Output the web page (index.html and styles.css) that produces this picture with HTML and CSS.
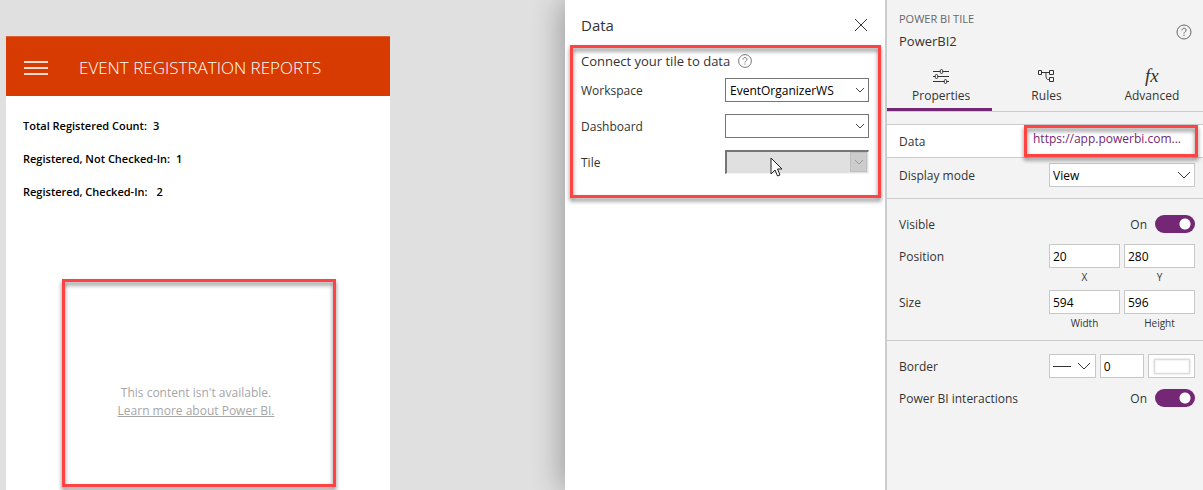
FILE: index.html
```html
<!DOCTYPE html>
<html lang="en">
<head>
<meta charset="utf-8">
<title>Event Registration Reports</title>
<link rel="stylesheet" href="styles.css">
</head>
<body>
<div class="studio">
  <main class="canvas">
    <div class="phone">
      <header class="app-bar">
        <button class="menu" aria-label="Menu">
          <svg width="24" height="15" viewBox="0 0 24 15" aria-hidden="true"><path d="M0 1h24M0 7h24M0 13h24" stroke="#fbd9cc" stroke-width="2"/></svg>
        </button>
        <h1 class="app-title">EVENT REGISTRATION REPORTS</h1>
      </header>
      <dl class="counts">
        <div class="count"><dt>Total Registered Count:</dt><dd>3</dd></div>
        <div class="count"><dt>Registered, Not Checked-In:</dt><dd>1</dd></div>
        <div class="count wide"><dt>Registered, Checked-In:</dt><dd>2</dd></div>
      </dl>
      <section class="tile highlight">
        <p class="tile-text">This content isn't available.</p>
        <a class="tile-text" href="#">Learn more about Power BI.</a>
      </section>
    </div>
  </main>

  <aside class="data-panel">
    <header class="data-head">
      <h2 class="data-title">Data</h2>
      <button class="close" aria-label="Close">
        <svg width="14" height="14" viewBox="0 0 14 14" aria-hidden="true"><path d="M1 1l12 12M13 1L1 13" stroke="#333" fill="none"/></svg>
      </button>
    </header>
    <section class="connect highlight">
      <div class="connect-head">
        <h3 class="connect-title">Connect your tile to data</h3>
        <svg width="14" height="14" viewBox="0 0 16 16" fill="none" stroke="#666" aria-hidden="true"><circle cx="8" cy="8" r="7.3"/><path d="M5.7 6.3c0-3 4.6-2.9 4.6-.2 0 1.700-2.300 1.700-2.300 3.600M8 10.900v1.300"/></svg>
      </div>
      <div class="field">
        <label for="workspace">Workspace</label>
        <span class="pick dark"><select id="workspace"><option>EventOrganizerWS</option></select><svg width="10" height="6" viewBox="0 0 10 6" aria-hidden="true"><path d="M1 1l4 4 4-4" stroke="#444" fill="none"/></svg></span>
      </div>
      <div class="field">
        <label for="dashboard">Dashboard</label>
        <span class="pick dark"><select id="dashboard"><option></option></select><svg width="10" height="6" viewBox="0 0 10 6" aria-hidden="true"><path d="M1 1l4 4 4-4" stroke="#444" fill="none"/></svg></span>
      </div>
      <div class="field">
        <label for="tile">Tile</label>
        <span class="pick off"><select id="tile" disabled><option></option></select><span class="off-arrow"><svg width="10" height="6" viewBox="0 0 10 6" aria-hidden="true"><path d="M1 1l4 4 4-4" stroke="#999" fill="none"/></svg></span>
          <svg class="pointer" width="13" height="20" viewBox="0 0 13 20" aria-hidden="true"><path d="M1 1v16l4-4 2.500 6 2.500-1-2.500-6H12z" fill="#fff" stroke="#222"/></svg>
        </span>
      </div>
    </section>
  </aside>

  <aside class="props">
    <header class="props-head">
      <div>
        <p class="kind">POWER BI TILE</p>
        <h2 class="name">PowerBI2</h2>
      </div>
      <button class="help" aria-label="Help">
        <svg width="16" height="16" viewBox="0 0 16 16" fill="none" stroke="#666" aria-hidden="true"><circle cx="8" cy="8" r="7"/><path d="M6 6.300c0-2.700 4.100-2.700 4.100-.2 0 1.700-2.100 1.600-2.100 3.500M8 10.700v1.300"/></svg>
      </button>
    </header>
    <nav class="tabs">
      <button class="tab active">
        <svg width="16" height="16" viewBox="0 0 16 16" fill="none" stroke="#333" aria-hidden="true"><path d="M0 3.500h7M10 3.500h6M0 8.500h2M5 8.500h11M0 13.500h11M14 13.500h2"/><rect x="7.300" y="1.500" width="2.400" height="4" rx="1.200"/><rect x="2.300" y="6.500" width="2.400" height="4" rx="1.200"/><rect x="11.300" y="11.500" width="2.400" height="4" rx="1.200"/></svg>
        Properties
      </button>
      <button class="tab">
        <svg width="16" height="16" viewBox="0 0 16 16" fill="none" stroke="#333" aria-hidden="true"><path d="M.5 2.500h3v4h-3zM11.500 2.500h4v4h-4zM11.500 9.500h4v4h-4zM3.500 4.500h8M7.500 4.500c1 1 0 4 1 6 .5 1 1 1 3 1"/></svg>
        Rules
      </button>
      <button class="tab">
        <span class="fx" aria-hidden="true">fx</span>
        Advanced
      </button>
    </nav>
    <div class="row data-row">
      <span class="row-label">Data</span>
      <a class="url highlight" href="#">https://app.powerbi.com...</a>
    </div>
    <div class="group mode">
      <div class="row">
        <label class="row-label" for="mode">Display mode</label>
        <span class="controls"><span class="pick large"><select id="mode"><option>View</option></select><svg width="14" height="8" viewBox="0 0 14 8" aria-hidden="true"><path d="M1 1l6 6 6-6" stroke="#333" fill="none"/></svg></span></span>
      </div>
    </div>
    <div class="group layout">
      <div class="row switch-row">
        <label class="row-label" for="visible">Visible</label>
        <span>On</span><input class="toggle" id="visible" type="checkbox" role="switch" checked>
      </div>
      <div class="row">
        <span class="row-label">Position</span>
        <div class="controls">
          <div class="num"><input id="x" value="20"><label for="x">X</label></div>
          <div class="num"><input id="y" value="280"><label for="y">Y</label></div>
        </div>
      </div>
      <div class="row">
        <span class="row-label">Size</span>
        <div class="controls">
          <div class="num"><input id="w" value="594"><label for="w">Width</label></div>
          <div class="num"><input id="h" value="596"><label for="h">Height</label></div>
        </div>
      </div>
    </div>
    <div class="group border">
      <div class="row">
        <label class="row-label" for="bw">Border</label>
        <div class="controls">
          <button class="line-style" aria-label="Border style"><svg width="38" height="8" viewBox="0 0 38 8" fill="none" stroke="#333" aria-hidden="true"><path d="M0 4.500h18M25 1l6 6 6-6"/></svg></button>
          <div class="num"><input id="bw" value="0"></div>
          <button class="swatch" aria-label="Border color"><span></span></button>
        </div>
      </div>
      <div class="row switch-row">
        <label class="row-label" for="inter">Power BI interactions</label>
        <span>On</span><input class="toggle" id="inter" type="checkbox" role="switch" checked>
      </div>
    </div>
  </aside>
</div>
</body>
</html>
```
FILE: styles.css
```css
* { box-sizing: border-box; }

body {
  margin: 0;
  font: 12px/16px "Open Sans", "Noto Sans", sans-serif;
  color: #333;
}

h1, h2, h3, p, dl, dd { margin: 0; font-weight: 400; }

button {
  display: flex;
  padding: 0;
  border: 0;
  background: none;
  font: inherit;
  color: inherit;
}

input, select { font: inherit; color: #000; }

.studio {
  display: grid;
  grid-template-columns: 1fr 320px 318px;
  min-height: 100vh;
  background: #e0e0e0;
}

/* Red callout frame laid over the content it marks */
.highlight { position: relative; }
.highlight::after {
  content: "";
  position: absolute;
  inset: 0;
  border: 3px solid #ff4343;
  filter: drop-shadow(0 3px 2px rgba(0, 0, 0, .5));
  pointer-events: none;
}

/* App canvas */
.canvas {
  display: flex;
  padding: 36px 6px 0;
}
.phone {
  flex: 0 1 384px;
  display: flex;
  flex-direction: column;
  background: #fff;
}
.app-bar {
  display: flex;
  align-items: center;
  gap: 31px;
  height: 60px;
  padding: 3px 18px 0;
  border-top: 1px solid #df6237;
  background: #d83b01;
}
.app-title {
  font-size: 17px;
  font-weight: 300;
  line-height: 24px;
  color: #fff;
  white-space: nowrap;
}
.counts {
  padding: 13px 17px 12px;
  font-size: 11px;
  line-height: 33px;
  color: #000;
}
.count { display: flex; gap: 6px; }
.count dt, .count dd { font-weight: 600; }
.count.wide { gap: 9px; }
.tile {
  width: 274px;
  height: 208px;
  margin: 59px 54px 3px 56px;
  display: flex;
  flex-direction: column;
  align-items: center;
  padding: 105px 6px 0 0;
}
.tile-text {
  font-size: 12px;
  line-height: 18px;
  color: #a6a6a6;
}

/* Data panel */
.data-panel {
  background: #fff;
  box-shadow: -4px 0 28px rgba(0, 0, 0, .3);
}
.data-head {
  display: flex;
  justify-content: space-between;
  align-items: center;
  height: 45px;
  padding: 4px 17px 0 16px;
}
.data-title { font-size: 15px; line-height: 20px; }
.connect {
  display: flex;
  flex-direction: column;
  gap: 12px;
  margin: 0 4px 0 5px;
  padding: 6px 12px 24px 11px;
}
.connect-head {
  display: flex;
  align-items: center;
  gap: 8px;
  height: 20px;
  margin-bottom: -5px;
}
.connect-title { font-size: 13px; line-height: 20px; }
.field {
  display: flex;
  align-items: center;
  justify-content: space-between;
}
.field label { padding-top: 2px; }

/* Drop-downs: the arrow shares the select's grid cell */
.pick {
  display: grid;
  align-items: center;
  width: 144px;
}
.pick > * { grid-area: 1 / 1; }
.pick > svg {
  justify-self: end;
  margin-right: 4px;
  pointer-events: none;
}
.pick select {
  appearance: none;
  width: 100%;
  height: 24px;
  padding: 2px 4px 0;
  border: 1px solid #767676;
  border-radius: 0;
  background: #fff;
}
.pick.large { width: 100%; }
.pick.large select { border-color: #c8c8c8; padding: 2px 3px 0; }
.pick.off { position: relative; }
.pick.off select {
  border: solid;
  border-width: 2px 1px 1px 2px;
  border-color: #767676 #f3f3f3 #f3f3f3 #767676;
  background: #e0e0e0;
  opacity: 1;
}
.off-arrow {
  justify-self: end;
  display: grid;
  place-items: center;
  width: 17px;
  height: 20px;
  margin-right: 2px;
  border: 1px solid #bfbfbf;
  background: #ccc;
}
.pick > .pointer {
  position: absolute;
  left: 45px;
  top: 7px;
  margin: 0;
}

/* Properties panel */
.props {
  z-index: 1;
  border-left: 2px solid #ccc;
  background: #f3f3f3;
}
.props-head {
  display: flex;
  justify-content: space-between;
  align-items: center;
  height: 62px;
  padding: 2px 11px 0 12px;
}
.kind { font-size: 11px; line-height: 18px; color: #666; }
.name { font-size: 13px; line-height: 26px; }
.tabs {
  display: grid;
  grid-template-columns: repeat(3, 1fr);
  margin-bottom: 12px;
  border-bottom: 1px solid #ccc;
}
.tab {
  flex-direction: column;
  align-items: center;
  gap: 4px;
  padding: 6px 0 4px 3px;
  border-bottom: 3px solid transparent;
}
.tab.active { border-color: #742774; }
.fx { font: italic 19px/16px "Liberation Serif", serif; }
.row {
  display: flex;
  align-items: flex-start;
  padding: 0 8px 0 12px;
}
.row-label { flex: 1; line-height: 26px; }
.data-row {
  align-items: center;
  height: 34px;
  padding-right: 5px;
  border: solid #ccc;
  border-width: 1px 0;
  background: #fff;
}
.data-row .row-label { padding-top: 2px; }
.url {
  width: 174px;
  height: 32px;
  padding: 0 9px;
  line-height: 28px;
  color: #742774;
  text-decoration: none;
}
.group + .group { border-top: 1px solid #ccc; }
.mode { padding: 5px 0 9px; }
.layout { padding: 15px 0 8px; }
.layout .row + .row { padding-top: 4px; }
.layout .switch-row + .row { padding-top: 10px; }
.border { padding-top: 13px; }
.border .row + .row { padding-top: 8px; }
.controls { display: flex; gap: 4px; width: 146px; }
.num {
  flex: 1;
  display: flex;
  flex-direction: column;
  min-width: 0;
}
.num input {
  width: 100%;
  height: 24px;
  padding: 0 3px;
  border: 1px solid #c8c8c8;
}
.num label {
  font-size: 10px;
  line-height: 18px;
  text-align: center;
}
.switch-row { align-items: center; gap: 8px; }
.switch-row .row-label { padding-top: 2px; line-height: 18px; }
.switch-row span { padding-top: 1px; }
.toggle {
  appearance: none;
  width: 40px;
  height: 18px;
  margin: 0;
  border-radius: 9px;
  background: radial-gradient(circle at 30px 9px, #fff 5px, #742774 6px);
}
.line-style, .swatch {
  flex: 1;
  height: 24px;
  align-items: center;
  justify-content: center;
  border: 1px solid #c8c8c8;
  background: #fff;
}
.swatch span {
  width: 36px;
  height: 15px;
  border: 1px solid #ddd;
  box-shadow: 0 0 2px #ccc, inset 0 0 2px #ddd;
}
```
